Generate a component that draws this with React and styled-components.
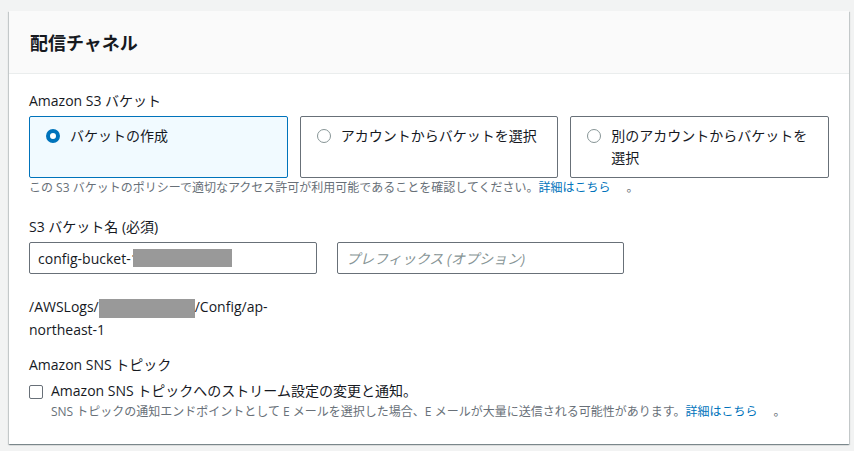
import React from "react";
import styled, { createGlobalStyle } from "styled-components";

const GlobalStyle = createGlobalStyle`
  html, body {
    margin: 0;
    padding: 0;
    background: #f2f3f3;
  }
  body {
    font-family: "Open Sans", "Noto Sans CJK JP", sans-serif;
    color: #16191f;
    -webkit-font-smoothing: antialiased;
  }
`;

const tiles = [
  { label: "バケットの作成", selected: true },
  { label: "アカウントからバケットを選択", selected: false },
  { label: "別のアカウントからバケットを選択", selected: false },
];

const App = () => {
  return (
    <>
      <GlobalStyle />
      <Page>
        <Card>
          <Header>
            <Title>配信チャネル</Title>
          </Header>
          <Body>
            <Field>
              <Label>Amazon S3 バケット</Label>
              <TileGrid>
                {tiles.map((t) => (
                  <Tile key={t.label} $selected={t.selected}>
                    <Radio $selected={t.selected} />
                    <TileText>{t.label}</TileText>
                  </Tile>
                ))}
              </TileGrid>
              <Help>
                この S3 バケットのポリシーで適切なアクセス許可が利用可能であることを確認してください。
                <Link>詳細はこちら</Link>
                <IconGap />。
              </Help>
            </Field>

            <Field>
              <Label>S3 バケット名 (必須)</Label>
              <InputRow>
                <Input>
                  config-bucket-1
                  <Redacted $w={99} $h={18} $pull={-6} />
                </Input>
                <Input $placeholder>プレフィックス (オプション)</Input>
              </InputRow>
            </Field>

            <PathText>
              /AWSLogs/<Redacted $w={96} $h={19} $pull={0} />/Config/ap-northeast-1
            </PathText>

            <Field>
              <Label>Amazon SNS トピック</Label>
              <CheckRow>
                <Checkbox />
                <div>
                  <CheckText>
                    Amazon SNS トピックへのストリーム設定の変更と通知。
                  </CheckText>
                  <Help>
                    SNS トピックの通知エンドポイントとして E
                    メールを選択した場合、E
                    メールが大量に送信される可能性があります。
                    <Link>詳細はこちら</Link>
                    <IconGap />。
                  </Help>
                </div>
              </CheckRow>
            </Field>
          </Body>
        </Card>
      </Page>
    </>
  );
};

const Page = styled.div`
  padding: 11px 5px 8px 9px;
`;

const Card = styled.section`
  width: 840px;
  background: #ffffff;
  box-shadow: 0 1px 1px 0 rgba(0, 28, 36, 0.3),
    1px 1px 1px 0 rgba(0, 28, 36, 0.15), -1px 1px 1px 0 rgba(0, 28, 36, 0.15);
`;

const Header = styled.header`
  height: 62px;
  display: flex;
  align-items: center;
  padding: 0 21px;
  background: #fafafa;
  border-bottom: 1px solid #eaeded;
`;

const Title = styled.h2`
  margin: 0;
  font-family: "Noto Sans CJK JP", sans-serif;
  font-size: 18px;
  font-weight: 700;
  line-height: 24px;
  color: #16191f;
`;

const Body = styled.div`
  padding: 16px 20px 24px 20px;
  display: flex;
  flex-direction: column;
  gap: 20px;
`;

const Field = styled.div`
  display: flex;
  flex-direction: column;
`;

const Label = styled.div`
  font-size: 14px;
  line-height: 22px;
  margin-bottom: 4px;
`;

const TileGrid = styled.div`
  display: grid;
  grid-template-columns: repeat(3, 1fr);
  gap: 12px;
`;

const Tile = styled.div`
  display: flex;
  align-items: flex-start;
  gap: 10px;
  min-height: 44px;
  padding: 8px 16px;
  border: 1px solid ${(p) => (p.$selected ? "#0073bb" : "#687078")};
  border-radius: 2px;
  background: ${(p) => (p.$selected ? "#f1faff" : "#ffffff")};
`;

const Radio = styled.span`
  flex: none;
  box-sizing: border-box;
  width: 14px;
  height: 14px;
  margin-top: 4px;
  border-radius: 50%;
  background: #ffffff;
  border: ${(p) => (p.$selected ? "4px solid #0073bb" : "1.5px solid #879596")};
`;

const TileText = styled.span`
  font-size: 14px;
  line-height: 22px;
`;

const Help = styled.div`
  margin-top: 2px;
  font-size: 12px;
  line-height: 16px;
  color: #687078;
`;

const Link = styled.a`
  color: #0073bb;
  cursor: pointer;
`;

const IconGap = styled.span`
  display: inline-block;
  width: 16px;
`;

const InputRow = styled.div`
  display: grid;
  grid-template-columns: 288px 287px;
  gap: 20px;
`;

const Input = styled.div`
  height: 32px;
  box-sizing: border-box;
  display: flex;
  align-items: center;
  padding: 0 8px;
  border: 1px solid #687078;
  border-radius: 2px;
  font-size: 14px;
  color: ${(p) => (p.$placeholder ? "#879596" : "#16191f")};
  font-style: ${(p) => (p.$placeholder ? "italic" : "normal")};
  white-space: nowrap;
  overflow: hidden;
`;

const Redacted = styled.span`
  display: inline-block;
  width: ${(p) => p.$w}px;
  height: ${(p) => p.$h}px;
  margin-left: ${(p) => p.$pull}px;
  background: #999999;
  vertical-align: middle;
`;

const PathText = styled.div`
  width: 288px;
  font-size: 14px;
  line-height: 23px;
  margin-top: 1px;
  margin-bottom: -7px;
`;

const CheckRow = styled.div`
  display: flex;
  align-items: flex-start;
  gap: 8px;
`;

const Checkbox = styled.span`
  flex: none;
  box-sizing: border-box;
  width: 14px;
  height: 14px;
  margin-top: 5px;
  border: 1px solid #687078;
  border-radius: 2px;
  background: #ffffff;
`;

const CheckText = styled.div`
  font-size: 14px;
  line-height: 22px;
`;

export default App;
